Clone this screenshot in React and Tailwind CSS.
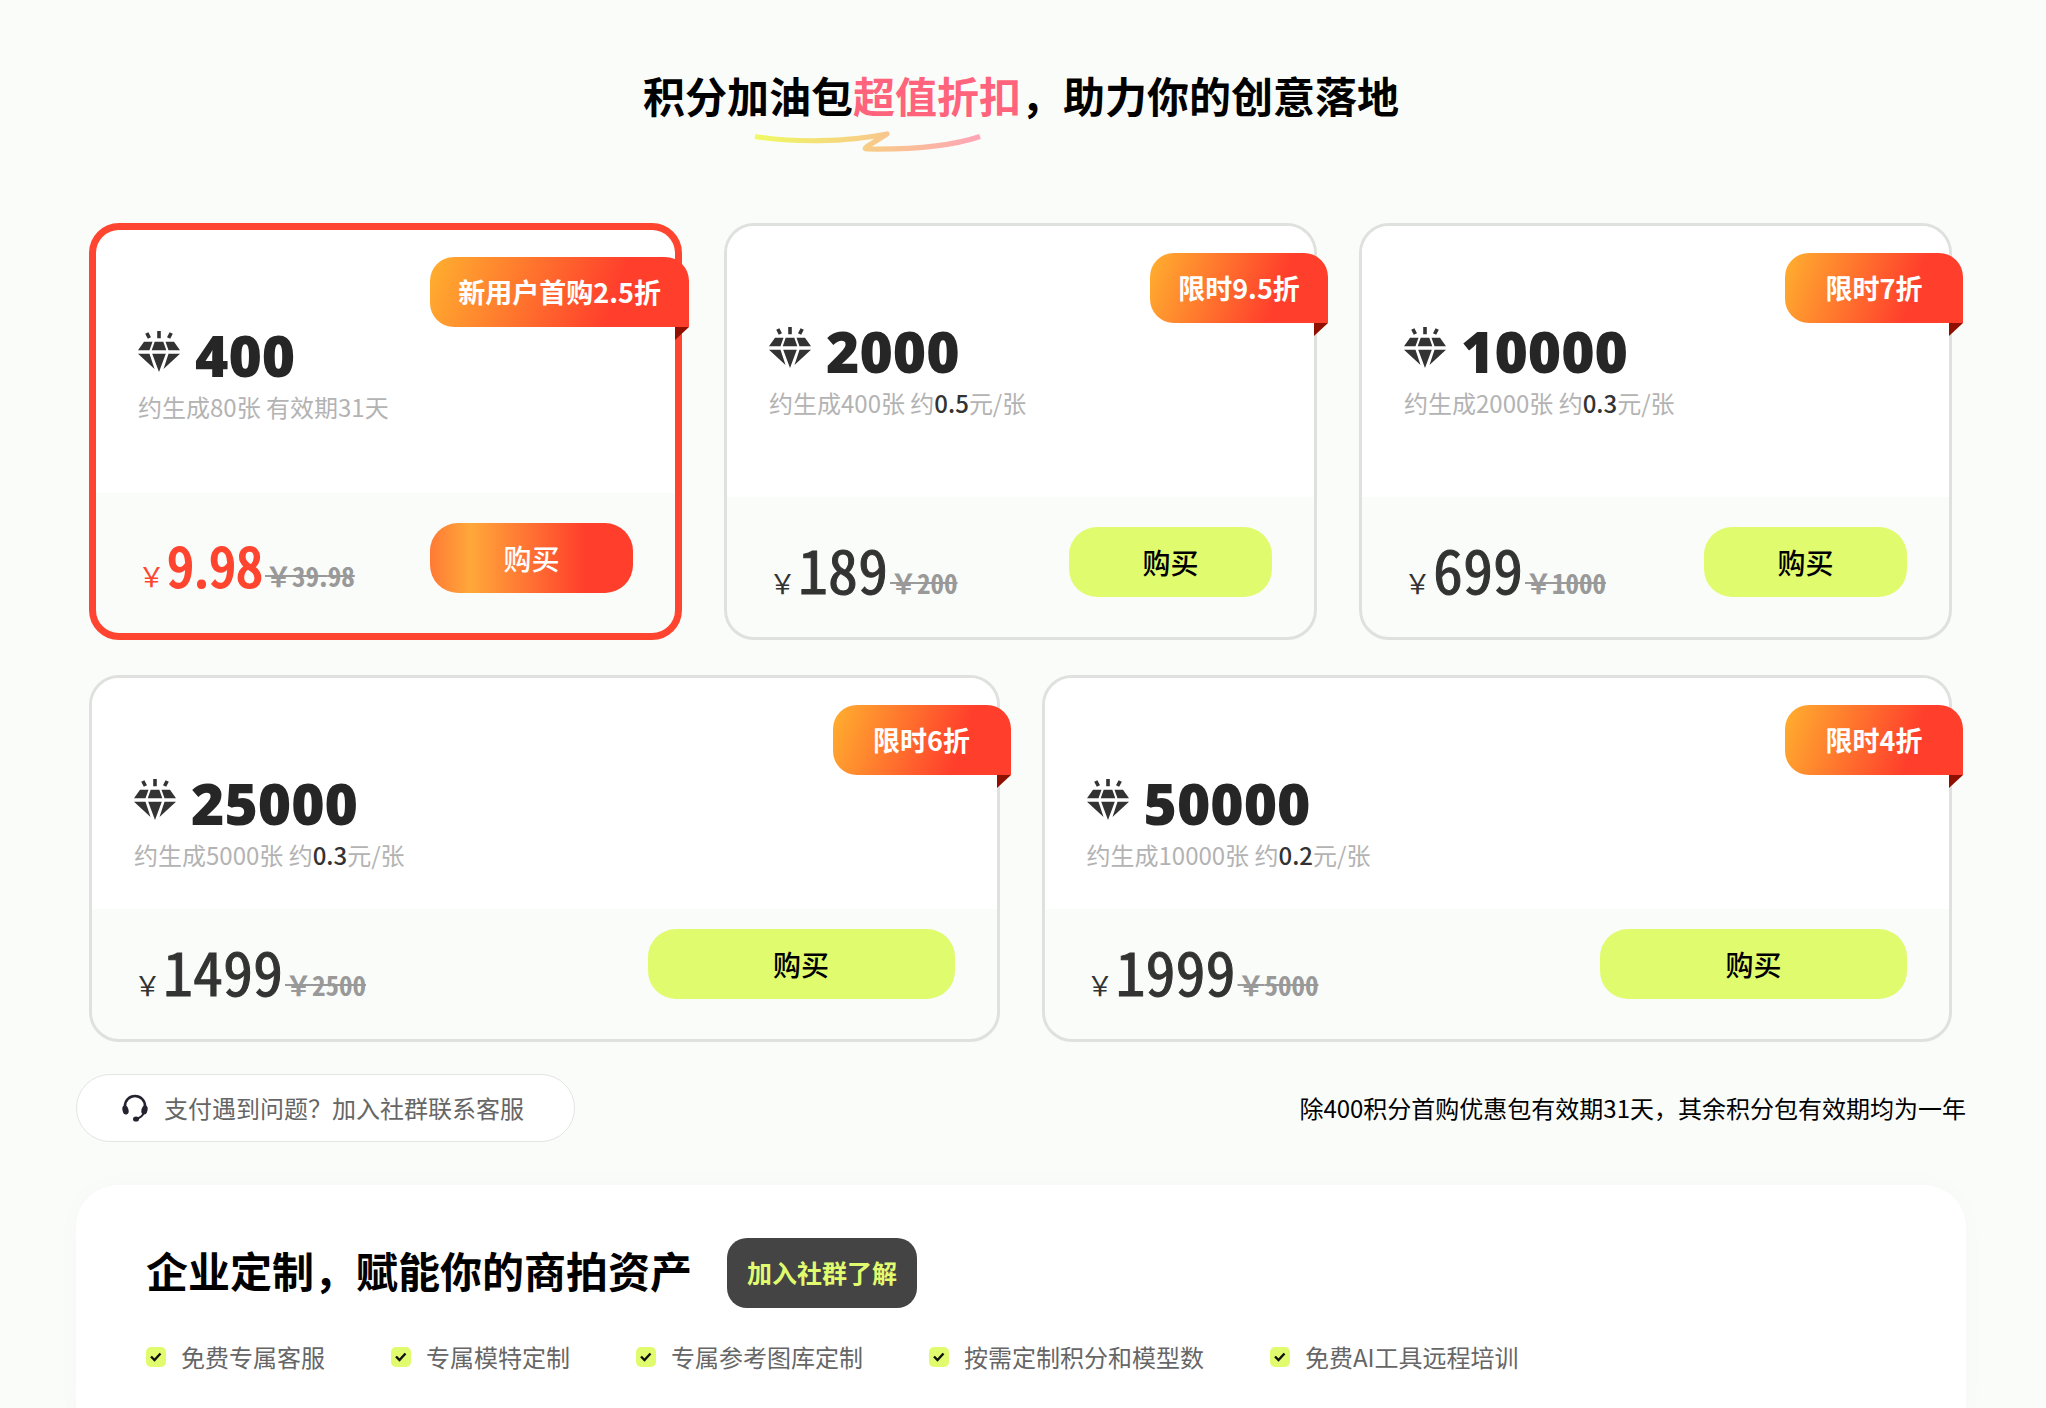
import { Fragment } from "react";
import clsx from "clsx";

const FIRST_ROW = [
  { points: "400", images: 80, days: 31, price: "9.98", original: "39.98", tag: "新用户首购2.5折", featured: true },
  { points: "2000", images: 400, unit: "0.5", price: "189", original: "200", tag: "限时9.5折" },
  { points: "10000", images: 2000, unit: "0.3", price: "699", original: "1000", tag: "限时7折" },
];

const SECOND_ROW = [
  { points: "25000", images: 5000, unit: "0.3", price: "1499", original: "2500", tag: "限时6折" },
  { points: "50000", images: 10000, unit: "0.2", price: "1999", original: "5000", tag: "限时4折" },
];

const FEATURES = [
  "免费专属客服",
  "专属模特定制",
  "专属参考图库定制",
  "按需定制积分和模型数",
  "免费AI工具远程培训",
];

function DiamondIcon() {
  return (
    <svg width="42" height="42" viewBox="0 0 42 42" fill="#333333" aria-hidden="true">
      <path d="M6 10.700h8.500l-3 8.600H0zM16.700 10.700h8.600l3 8.600H13.700zM27.500 10.700H36l6 8.600H30.500z" />
      <path d="M0 22.700h11.500l5 15.300zM14.200 22.700h13.600L21 41zM30.500 22.700H42L25.500 38z" />
      <path d="M8.800 2l2.600 5M21 0v7.300M33.200 2l-2.600 5" stroke="#333333" strokeWidth="3.600" />
    </svg>
  );
}

function HeadsetIcon() {
  return (
    <svg width="28" height="28" viewBox="0 0 28 28" fill="none" aria-hidden="true">
      <path d="M4 15v-3a10 10 0 0 1 20 0v3" stroke="#24222f" strokeWidth="2.600" />
      <path d="M23 18c-1 4-4 6-8 7" stroke="#24222f" strokeWidth="2" />
      <ellipse cx="4.500" cy="16" rx="3" ry="4.600" transform="rotate(-14 4.500 16)" fill="#24222f" />
      <ellipse cx="23.500" cy="16" rx="3" ry="4.600" transform="rotate(14 23.500 16)" fill="#24222f" />
      <ellipse cx="15" cy="25" rx="3" ry="2.600" fill="#24222f" />
    </svg>
  );
}

function CheckIcon() {
  return (
    <svg width="20" height="20" viewBox="0 0 20 20" fill="none" aria-hidden="true">
      <rect width="20" height="20" rx="5" fill="#e1fb6f" />
      <path d="M5 9.500l3.500 3.500 6-6.500" stroke="#111111" strokeWidth="2.400" />
    </svg>
  );
}

function Squiggle() {
  return (
    <svg width="228" height="24" viewBox="0 0 228 24" fill="none" aria-hidden="true">
      <defs>
        <linearGradient id="squiggle" x1="0" y1="0" x2="228" y2="0" gradientUnits="userSpaceOnUse">
          <stop stopColor="#effb62" />
          <stop offset="0.5" stopColor="#f7cd86" />
          <stop offset="1" stopColor="#ffa3b8" />
        </linearGradient>
      </defs>
      <path
        d="M1 5.500C40 11.500 90 11.500 133 3L113 15.500C110 18 111 18 114 18C150 18.500 195 16 226 5.500"
        stroke="url(#squiggle)"
        strokeWidth="5.200"
        strokeLinejoin="round"
      />
    </svg>
  );
}

// Narrow digits, with the decimal point kept at its own width
function Amount({ value }) {
  return value.split(".").map((part, index) => (
    <Fragment key={index}>
      {index > 0 && <span className="font-['Noto_Sans_CJK_SC']">.</span>}
      {part}
    </Fragment>
  ));
}

function PackCard({ pack, wide }) {
  const { featured } = pack;
  return (
    <article
      className={clsx(
        "relative flex flex-col rounded-[30px] bg-[#fafcf9]",
        featured ? "border-[7px] border-[#ff452f]" : "border-[3px] border-[#dfe1de]",
        wide ? "h-[367px]" : "h-[417px]",
      )}
    >
      <div className="absolute top-[27px] -right-[14px]">
        <span className="flex h-[70px] min-w-[178px] items-center justify-center rounded-[24px] rounded-br-none bg-[linear-gradient(110deg,#ffb02f_0%,#ff3f2c_70%)] px-7 text-[27px] font-bold text-white">
          {pack.tag}
        </span>
        <svg className="absolute top-full right-0" width="14" height="13" aria-hidden="true">
          <path d="M0 0h14L0 13z" fill="#8f1000" />
        </svg>
      </div>

      <div className="flex-1 rounded-t-[27px] bg-white px-[42px] pt-[101px]">
        <div className="flex h-[54px] items-start gap-[15px]">
          <DiamondIcon />
          <strong className="font-['Noto_Sans'] text-[57px] leading-[48px] font-black text-[#262626]">
            {pack.points}
          </strong>
        </div>
        <p className="mt-1 text-[24px] leading-9 text-[#b3b3b3]">
          约生成{pack.images}张{" "}
          {pack.unit ? (
            <>
              约<span className="font-medium text-[#333333]">{pack.unit}</span>元/张
            </>
          ) : (
            <>有效期{pack.days}天</>
          )}
        </p>
      </div>

      <div
        className={clsx(
          "flex items-start justify-between px-[42px]",
          wide ? "h-[130px] pt-5" : "h-[140px] pt-[30px]",
        )}
      >
        <p
          className={clsx(
            "flex items-baseline gap-0.5 pt-[7px]",
            featured ? "text-[#ff452f]" : "text-[#333333]",
          )}
        >
          <span className="text-[27px]">￥</span>
          <strong
            className={clsx(
              "font-['Noto_Sans_Mono_CJK_SC','Noto_Sans_CJK_SC'] leading-[68px] font-normal",
              featured
                ? "text-[54px] [-webkit-text-stroke:2px_#ff452f]"
                : "text-[60px] [-webkit-text-stroke:1px_#333333]",
            )}
          >
            <Amount value={pack.price} />
          </strong>
          <del className="font-['Noto_Sans_Mono_CJK_SC','Noto_Sans_CJK_SC'] text-[27px] font-bold text-[#999999]">
            ￥<Amount value={pack.original} />
          </del>
        </p>
        <button
          type="button"
          className={clsx(
            "h-[70px] rounded-[28px] text-[28px] font-medium",
            wide ? "w-[307px]" : "w-[203px]",
            featured
              ? "bg-[linear-gradient(90deg,#ff7a35_0%,#ffa83a_20%,#ff3f2c_76%)] text-white"
              : "bg-[#e1fb6f] text-black",
          )}
        >
          购买
        </button>
      </div>
    </article>
  );
}

export default function App() {
  return (
    <main className="min-h-screen overflow-hidden bg-[#fafcf9] pr-20 pl-[76px] font-['Noto_Sans_CJK_SC',sans-serif] text-black">
      <header className="flex flex-col items-center pt-[65px]">
        <h1 className="text-[42px] leading-[60px] font-bold">
          积分加油包<span className="text-[#ff647c]">超值折扣</span>，助力你的创意落地
        </h1>
        <div className="mt-[6px] pr-[306px]">
          <Squiggle />
        </div>
      </header>

      <section className="mt-[68px] flex flex-col gap-[35px] pr-[14px] pl-[13px]">
        <div className="grid grid-cols-3 gap-[42px]">
          {FIRST_ROW.map((pack) => (
            <PackCard key={pack.points} pack={pack} />
          ))}
        </div>
        <div className="grid grid-cols-2 gap-[42px]">
          {SECOND_ROW.map((pack) => (
            <PackCard key={pack.points} pack={pack} wide />
          ))}
        </div>
      </section>

      <div className="mt-8 flex items-center justify-between">
        <button
          type="button"
          className="flex h-[68px] items-center gap-[15px] rounded-full border border-[#e3e5e2] bg-white pr-[50px] pl-11 text-[24px] text-[#666666]"
        >
          <HeadsetIcon />
          支付遇到问题？加入社群联系客服
        </button>
        <p className="text-[24px]">除400积分首购优惠包有效期31天，其余积分包有效期均为一年</p>
      </div>

      <section className="mt-[43px] h-[260px] rounded-[42px] bg-white px-[70px] pt-[53px] shadow-[0_0_28px_rgba(0,0,0,0.02)]">
        <div className="flex items-center gap-[35px]">
          <h2 className="pb-[6px] text-[42px] leading-[60px] font-bold">企业定制，赋能你的商拍资产</h2>
          <button
            type="button"
            className="h-[70px] rounded-[20px] bg-[#444444] px-5 text-[25px] font-bold text-[#e1fb6f]"
          >
            加入社群了解
          </button>
        </div>
        <ul className="mt-[31px] flex gap-[66px]">
          {FEATURES.map((feature) => (
            <li key={feature} className="flex items-center gap-[15px] text-[24px] text-[#666666]">
              <CheckIcon />
              {feature}
            </li>
          ))}
        </ul>
      </section>
    </main>
  );
}
